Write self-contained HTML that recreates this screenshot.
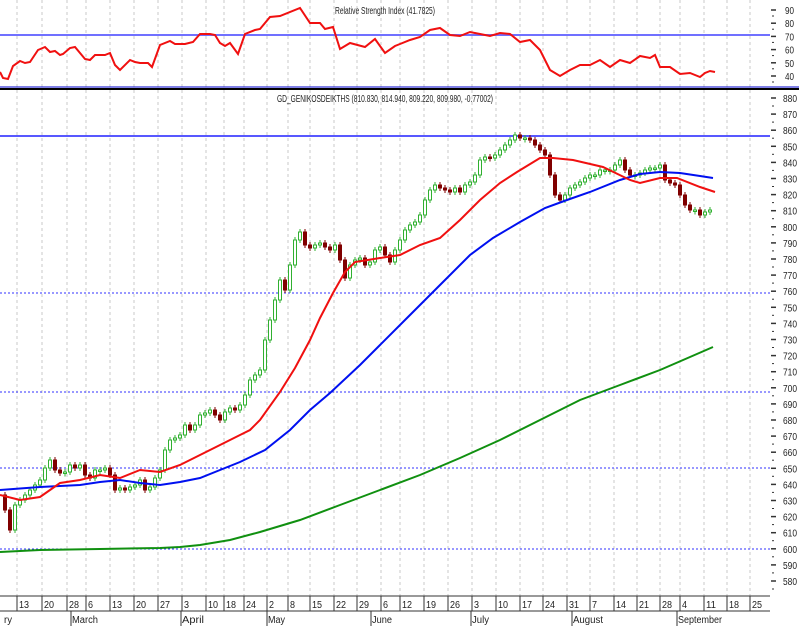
<!DOCTYPE html>
<html><head><meta charset="utf-8"><style>
html,body{margin:0;padding:0;background:#fff;width:799px;height:626px;overflow:hidden}
svg text{font-family:"Liberation Sans Narrow","Liberation Sans",sans-serif;font-size:10px;fill:#222}
</style></head><body>
<svg id="s" width="799" height="626" xmlns="http://www.w3.org/2000/svg">
<g id="grid"></g>
<line x1="0" y1="35" x2="770" y2="35" stroke="#7070ff" stroke-width="2"/>
<line x1="0" y1="136" x2="770" y2="136" stroke="#2020ff" stroke-width="1.5"/>
<line x1="0" y1="293" x2="770" y2="293" stroke="#3030ff" stroke-dasharray="2,2"/>
<line x1="0" y1="392" x2="770" y2="392" stroke="#3030ff" stroke-dasharray="2,2"/>
<line x1="0" y1="468" x2="770" y2="468" stroke="#3030ff" stroke-dasharray="2,2"/>
<line x1="0" y1="549" x2="770" y2="549" stroke="#3030ff" stroke-dasharray="2,2"/>
<line x1="0" y1="87" x2="799" y2="87" stroke="#0000cc" stroke-width="1"/>
<line x1="0" y1="89" x2="799" y2="89" stroke="#000" stroke-width="2"/>
<text x="335" y="14" textLength="100" lengthAdjust="spacingAndGlyphs">Relative Strength Index (41.7825)</text>
<text x="277" y="102" textLength="216" lengthAdjust="spacingAndGlyphs">GD_GENIKOSDEIKTHS (810.830, 814.940, 809.220, 809.980, -0.77002)</text>
<g id="candles"></g>
<polyline id="ma200" fill="none" stroke="#109010" stroke-width="2"/>
<polyline id="ma50" fill="none" stroke="#0010f0" stroke-width="2"/>
<polyline id="ma20" fill="none" stroke="#f01010" stroke-width="2"/>
<polyline id="rsi" fill="none" stroke="#f01010" stroke-width="2"/>
<g id="axis"></g>
<line x1="0" y1="596" x2="770" y2="596" stroke="#333"/>
<line x1="0" y1="611" x2="770" y2="611" stroke="#333"/>
</svg>
<script>
(function(){
var NS="http://www.w3.org/2000/svg";
function el(p,t,a,txt){var e=document.createElementNS(NS,t);for(var k in a)e.setAttribute(k,a[k]);if(txt!=null)e.textContent=txt;document.getElementById(p).appendChild(e);return e;}
function pts(a){return a.map(function(p){return p[0]+","+p[1]}).join(" ");}
var dates=[[17,"13"],[42,"20"],[67,"28"],[86,"6"],[110,"13"],[134,"20"],[158,"27"],[182,"3"],[206,"10"],[224,"18"],[244,"24"],[267,"2"],[288,"8"],[310,"15"],[334,"22"],[357,"29"],[381,"6"],[400,"12"],[424,"19"],[448,"26"],[472,"3"],[496,"10"],[520,"17"],[543,"24"],[567,"31"],[590,"7"],[614,"14"],[637,"21"],[660,"28"],[680,"4"],[704,"11"],[727,"18"],[750,"25"]];
dates.forEach(function(d){
 el("grid","line",{x1:d[0],y1:0,x2:d[0],y2:596,stroke:"#c8c8c8","stroke-dasharray":"3,3"});
 el("axis","line",{x1:d[0],y1:596,x2:d[0],y2:611,stroke:"#333"});
 el("axis","text",{x:d[0]+2,y:608,textLength:d[1].length*5,lengthAdjust:"spacingAndGlyphs"},d[1]);
});
var months=[[3,"ry",0,8],[71,"March",1,26],[181,"April",1,22],[267,"May",1,17],[371,"June",1,20],[471,"July",1,17],[572,"August",1,30],[677,"September",1,44]];
months.forEach(function(m){
 if(m[2]!==0) el("axis","line",{x1:m[0],y1:611,x2:m[0],y2:626,stroke:"#333"});
 el("axis","text",{x:m[0]+1,y:623,textLength:m[3],lengthAdjust:"spacingAndGlyphs"},m[1]);
});
for(var p=880;p>=580;p-=10){var y=98+(880-p)*1.61;
 el("axis","line",{x1:771,y1:y,x2:776,y2:y,stroke:"#333","stroke-width":1.5});
 el("axis","line",{x1:772,y1:y+8,x2:774,y2:y+8,stroke:"#333"});
 el("axis","text",{x:783,y:y+4,textLength:14,lengthAdjust:"spacingAndGlyphs"},p);}
for(var r=90;r>=40;r-=10){var y=10+(90-r)*1.32;
 el("axis","line",{x1:771,y1:y,x2:776,y2:y,stroke:"#333","stroke-width":1.5});
 el("axis","line",{x1:772,y1:y+6,x2:774,y2:y+6,stroke:"#333"});
 el("axis","text",{x:785,y:y+4,textLength:9,lengthAdjust:"spacingAndGlyphs"},r);}
var cl=[[5,510],[10,530],[15,505],[20,500],[25,495],[30,490],[35,485],[40,480],[45,468],[50,460],[55,470],[60,473],[65,472],[70,465],[75,468],[80,465],[85,475],[90,478],[95,470],[100,470],[105,468],[110,475],[115,490],[120,488],[125,490],[130,487],[135,485],[140,480],[145,490],[150,487],[155,478],[160,470],[165,450],[170,440],[175,438],[180,435],[185,425],[190,430],[195,425],[200,415],[205,413],[210,410],[215,415],[220,420],[225,412],[230,408],[235,410],[240,405],[245,395],[250,380],[255,375],[260,370],[265,340],[270,320],[275,300],[280,280],[285,290],[290,265],[295,240],[300,232],[305,245],[310,248],[315,245],[320,243],[325,247],[330,250],[335,245],[340,260],[345,278],[350,265],[355,260],[360,258],[365,265],[370,262],[375,250],[380,247],[385,255],[390,262],[395,250],[400,240],[405,230],[410,225],[415,222],[420,215],[425,200],[430,190],[435,185],[440,188],[445,190],[450,192],[455,188],[460,192],[465,185],[470,182],[475,175],[480,160],[485,157],[490,158],[495,155],[500,150],[505,145],[510,140],[515,135],[520,138],[525,138],[530,140],[535,145],[540,150],[545,155],[550,175],[555,195],[560,200],[565,195],[570,188],[575,185],[580,182],[585,178],[590,175],[595,175],[600,170],[605,170],[610,170],[615,165],[620,160],[625,170],[630,175],[635,175],[640,173],[645,170],[650,168],[655,168],[660,165],[665,180],[670,183],[675,185],[680,195],[685,205],[690,210],[695,210],[700,215],[705,212],[710,210]];
for(var i=0;i<cl.length;i++){var cx=cl[i][0],c=cl[i][1],o=i?cl[i-1][1]:495;
 var up=c<=o,ty=Math.min(o,c),h=Math.max(Math.abs(o-c),1.5);
 var col=up?"#30b030":"#800000";
 el("candles","line",{x1:cx,y1:ty-3,x2:cx,y2:ty+h+3,stroke:col});
 el("candles","rect",{x:cx-1.5,y:ty,width:3,height:h,fill:up?"#fff":"#800000",stroke:col});
}
document.getElementById("ma20").setAttribute("points",pts([[0,495],[20,500],[40,497],[60,483],[80,480],[100,475],[120,478],[140,470],[160,472],[180,465],[200,455],[220,445],[240,435],[250,430],[260,420],[280,392],[295,368],[310,340],[320,318],[333,293],[345,272],[355,262],[380,258],[400,255],[420,245],[440,238],[460,220],[480,200],[500,183],[517,172],[540,158],[553,158],[573,160],[603,167],[630,180],[640,183],[660,178],[677,178],[700,187],[715,192]]));
document.getElementById("ma50").setAttribute("points",pts([[0,490],[40,487],[80,485],[100,482],[120,480],[140,483],[160,485],[180,482],[200,478],[220,470],[240,462],[265,450],[290,430],[310,410],[330,393],[360,365],[380,345],[407,318],[440,285],[470,255],[493,238],[520,222],[545,208],[567,200],[590,192],[620,180],[640,174],[660,172],[680,173],[700,176],[713,178]]));
document.getElementById("ma200").setAttribute("points",pts([[0,552],[40,550],[100,549],[160,548],[180,547],[200,545],[230,540],[260,532],[300,520],[340,505],[380,490],[420,475],[460,458],[500,440],[540,420],[580,400],[620,385],[660,370],[690,357],[713,347]]));
document.getElementById("rsi").setAttribute("points",pts([[0,72],[3,78],[8,79],[13,66],[20,61],[25,63],[30,62],[38,50],[45,47],[50,52],[55,51],[60,55],[63,54],[70,48],[75,47],[85,59],[90,60],[95,55],[105,55],[110,53],[115,65],[120,70],[130,60],[135,62],[140,63],[148,63],[152,67],[160,45],[170,41],[175,44],[185,44],[193,42],[200,34],[210,34],[215,35],[220,43],[225,46],[230,43],[238,54],[245,34],[255,30],[260,29],[270,17],[280,16],[300,8],[310,23],[320,23],[325,29],[333,27],[340,49],[350,43],[365,47],[375,39],[385,53],[395,46],[400,44],[410,40],[420,37],[430,30],[440,28],[450,35],[460,36],[470,32],[480,34],[490,36],[500,33],[510,34],[520,42],[530,40],[540,50],[550,70],[560,76],[565,73],[570,70],[580,65],[590,65],[600,60],[610,67],[620,60],[630,63],[640,56],[650,58],[655,55],[660,67],[670,67],[680,74],[690,73],[700,77],[705,73],[710,71],[715,72]]));
})();
</script>
</body></html>
